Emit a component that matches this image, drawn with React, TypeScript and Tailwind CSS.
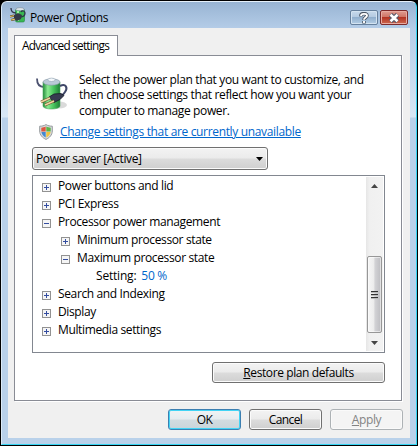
import type { ReactNode } from "react";

function BatteryIcon() {
  return (
    <svg width="34" height="34" viewBox="0 0 34 34" className="shrink-0">
      <defs>
        <linearGradient id="cell">
          <stop offset="0" stopColor="#248c3c" />
          <stop offset=".28" stopColor="#8cea92" />
          <stop offset=".6" stopColor="#4cc860" />
          <stop offset="1" stopColor="#1d7f35" />
        </linearGradient>
      </defs>
      <ellipse cx="23" cy="28" rx="8" ry="3.500" fill="#dadada" />
      <path d="M1 1.500C1 6 3 10 8 10" fill="none" stroke="#4c5270" strokeWidth="1.800" />
      <path d="M7 5v24c0 4 17 4 17 0V5z" fill="url(#cell)" stroke="#4aa85e" strokeWidth=".6" />
      <ellipse cx="15.500" cy="5" rx="8.500" ry="3.200" fill="#b9c9d6" stroke="#8596a4" strokeWidth=".6" />
      <ellipse cx="15.500" cy="2.800" rx="3.600" ry="1.700" fill="#f4f8fb" stroke="#92a2b2" strokeWidth=".6" />
      <path d="M24 9c6-3 8 2 5 6-2 3-3 3-5 5" fill="none" stroke="#3f4768" strokeWidth="2" />
      <path d="M13 20l5-3 7-.5 3 2-4 4-6 3z" fill="#363b50" stroke="#171a27" strokeWidth=".8" />
      <path d="M14 21l-9 4M18 24l-9 4" stroke="#705330" strokeWidth="3" />
      <path d="M14 21l-9 4M18 24l-9 4" stroke="#f0d7a1" strokeWidth="1.500" />
    </svg>
  );
}

function SmallBatteryIcon() {
  return (
    <svg width="16" height="16" viewBox="0 0 16 16" className="shrink-0">
      <rect x="5.500" y="2" width="9" height="13" rx="1.500" fill="#38b853" stroke="#248443" strokeWidth=".6" />
      <path d="M8 4v10" stroke="#a3efa4" strokeWidth="2" />
      <ellipse cx="10" cy="2.200" rx="4.200" ry="1.600" fill="#dce5e9" stroke="#789" strokeWidth=".6" />
      <path d="M1 1C1 4 3 6 6 6M10 10c3 0 5-1 5-4 0-2-3-3-4-1" fill="none" stroke="#30354b" strokeWidth="1.300" />
      <path d="M4 8l4-2 4 2-1 4-4 2-3-2z" fill="#343947" />
      <path d="M0 9.500l4-.8M1 13l4-.8" stroke="#594521" strokeWidth="2.200" />
      <path d="M0 9.500l4-.8M1 13l4-.8" stroke="#e6c96f" />
    </svg>
  );
}

function ShieldIcon() {
  return (
    <svg width="14" height="16" viewBox="0 0 14 16">
      <path d="M7 .6C5 1.800 3 2.200.7 2.200V7c0 4 3 7 6.300 8.400C10.300 14 13.300 11 13.300 7V2.200C11 2.200 9 1.800 7 .6z" fill="#d9dcde" stroke="#969a9d" />
      <path d="M2.300 3.700C4 3.600 5.200 3.300 6.700 2.500v5H2.300z" fill="#de563e" />
      <path d="M7.300 2.500c1.500.8 2.700 1.100 4.400 1.200v3.800H7.300z" fill="#5bb548" />
      <path d="M2.400 8h4.300v5.500C4.500 12.300 2.700 10.500 2.400 8z" fill="#4388d0" />
      <path d="M11.600 8H7.300v5.500C9.500 12.300 11.300 10.500 11.600 8z" fill="#efc33d" />
    </svg>
  );
}

function Button({ width, className, children }: { width: string; className: string; children: ReactNode }) {
  return (
    <button className={"flex h-[21px] items-center justify-center rounded-[3px] border leading-[17px] " + width + " " + className}>
      {children}
    </button>
  );
}

const normal =
  "border-[#707070] bg-[linear-gradient(#f3f3f3_0%,#ebebeb_48%,#dcdcdc_52%,#cfcfcf_100%)] shadow-[inset_0_0_0_1px_#fbfbfb]";

function Expander({ open }: { open: boolean }) {
  return (
    <svg width="9" height="9" viewBox="0 0 9 9" className="mt-[2px]" shapeRendering="crispEdges">
      <rect x=".5" y=".5" width="8" height="8" fill="#f5f5f5" stroke="#929292" />
      <path d={open ? "M2 4.500h5" : "M2 4.500h5M4.500 2v5"} stroke="#344da0" />
    </svg>
  );
}

function Row({ open = false, nested = false, children }: { open?: boolean; nested?: boolean; children: ReactNode }) {
  return (
    <div className={"flex h-[18px] items-center gap-[7px] " + (nested ? "pl-[27px]" : "pl-[8px]")}>
      <Expander open={open} />
      <span>{children}</span>
    </div>
  );
}

export default function App() {
  return (
    <div className="h-[446px] w-[418px] overflow-hidden bg-black p-px font-['Open_Sans','Noto_Sans',sans-serif] text-[12px] whitespace-nowrap text-black">
      <div className="flex h-[444px] w-[416px] flex-col rounded-t-[6px] border border-t-[#e5f0fa] border-r-[#35d5f3] border-b-[#35d5f3] border-l-[#dcebf8] bg-[linear-gradient(#98b4d3_0px,#b5cde8_27px,#d8e7f5_115px,#b9d1ea_116px,#b9d1ea_100%)] px-[6px] pb-[6px]">
        <header className="flex h-[26px] shrink-0 items-center pl-[2px]">
          <SmallBatteryIcon />
          <span className="ml-1 flex-1 pt-[5px] leading-[18px] tracking-[-0.36px]">Power Options</span>
          <div className="mt-[5px] mr-[2px] flex gap-[2px]">
            <div className="flex h-[15px] w-[28px] items-center justify-center rounded-[2px] border border-[#66809d] bg-[linear-gradient(#c7d9eb_0%,#b4cae1_46%,#91afcd_50%,#b4cee5_100%)] shadow-[inset_0_0_0_1px_#d3e3f1]">
              <svg width="10" height="12" viewBox="0 0 10 12">
                <path d="M2 4.500V3.500C2 1 8 1 8 3.500 8 5.500 5 5.500 5 8M5 9v2.500" fill="none" stroke="#4b5563" strokeWidth="3.600" />
                <path d="M2 4C2 1.200 8 1.200 8 3.500 8 5.500 5 5.500 5 7.700M5 9v2" fill="none" stroke="#fff" strokeWidth="1.900" />
              </svg>
            </div>
            <div className="flex h-[15px] w-[28px] items-center justify-center rounded-[2px] border border-[#7d2a2b] bg-[linear-gradient(#df9c91_0%,#cf7465_46%,#b33424_50%,#cd6950_100%)] shadow-[inset_0_0_0_1px_#e7aaa0]">
              <svg width="12" height="10" viewBox="0 0 12 10">
                <path d="M2.500 1.500l7 7M9.500 1.500l-7 7" stroke="#555b6d" strokeWidth="4.600" />
                <path d="M2.500 1.800l7 6.400M9.500 1.800l-7 6.400" stroke="#fff" strokeWidth="2.600" />
              </svg>
            </div>
          </div>
        </header>

        <main className="flex min-h-0 flex-1 flex-col bg-[#f0f0f0] px-[6px] pt-[7px]">
          <div className="z-10 -mb-px flex h-[21px] w-[104px] shrink-0 items-center border border-b-0 border-[#898c95] bg-white pl-[7px] text-[11.800px] tracking-[-0.75px]">
            Advanced settings
          </div>
          <section className="h-[346px] w-[388px] shrink-0 border border-[#898c95] bg-white pr-[16px] pl-[17px] shadow-[1px_1px_0_#fff]">
            <div className="flex h-[63px] gap-[9px] pt-[16px]">
              <div className="pt-[5px] pl-[4px]"><BatteryIcon /></div>
              <div className="tracking-[-0.345px]">
                <p className="h-[15px] leading-[15px]">Select the power plan that you want to customize, and</p>
                <p className="h-[15px] leading-[15px]">then choose settings that reflect how you want your</p>
                <p className="h-[15px] leading-[17px]">computer to manage power.</p>
              </div>
            </div>
            <div className="mb-[2px] flex h-[26px] items-center gap-[7px] pl-[7px]">
              <div className="-mt-px"><ShieldIcon /></div>
              <a className="tracking-[-0.34px] text-[#0066cc] underline">Change settings that are currently unavailable</a>
            </div>
            <div className={"flex h-[23px] w-[236px] items-center justify-between rounded-[3px] border pr-[4px] pl-[3px] " + normal}>
              <span className="tracking-[-0.36px]">Power saver [Active]</span>
              <svg width="7" height="4" viewBox="0 0 7 4"><path d="M0 0h7L3.500 4z" /></svg>
            </div>
            <div className="mt-[5px] flex h-[178px] w-[353px] justify-between border border-[#828790] p-px">
              <div className="tracking-[-0.37px]">
                <Row>Power buttons and lid</Row>
                <Row>PCI Express</Row>
                <Row open>Processor power management</Row>
                <Row nested>Minimum processor state</Row>
                <Row nested open>Maximum processor state</Row>
                <div className="flex h-[18px] items-center gap-[5px] pl-[62px]">
                  <span className="tracking-[-0.2px]">Setting:</span><span className="tracking-[-0.3px] text-[#0066cc]">50 %</span>
                </div>
                <Row>Search and Indexing</Row>
                <Row>Display</Row>
                <Row>Multimedia settings</Row>
              </div>
              <div className="flex w-[17px] flex-col items-center bg-[linear-gradient(90deg,#e6e6e6,#f0f0f0_20%,#f2f2f2)]">
                <div className="flex h-[79px] items-start pt-[7px]">
                  <svg width="7" height="4" viewBox="0 0 7 4"><path d="M0 4h7L3.500 0z" fill="#454545" /></svg>
                </div>
                <div className="flex h-[77px] w-[15px] flex-col items-center justify-center gap-px rounded-[2px] border border-[#979797] bg-[linear-gradient(90deg,#f6f6f6_0%,#ededed_42%,#d2d2d5_55%,#bdbdc1_100%)] shadow-[inset_0_0_0_1px_#ffffff88]">
                  <i className="h-[2px] w-[7px] border-t border-[#333] bg-[#bbb]" />
                  <i className="h-[2px] w-[7px] border-t border-[#333] bg-[#bbb]" />
                  <i className="h-[2px] w-[7px] border-t border-[#333] bg-[#bbb]" />
                </div>
                <svg width="7" height="4" viewBox="0 0 7 4" className="mt-[8px]"><path d="M0 0h7L3.500 4z" fill="#454545" /></svg>
              </div>
            </div>
            <div className="mt-[9px] flex justify-end">
              <Button width="w-[173px]" className={normal}><span className="tracking-[-0.4px]"><u>R</u>estore plan defaults</span></Button>
            </div>
          </section>
          <footer className="mt-[8px] flex gap-[8px] pl-[154px]">
            <Button width="w-[73px]" className="border-[#3c7fb1] bg-[linear-gradient(#f0f3f4_0%,#e5ecef_48%,#d2dce0_52%,#c9d5da_100%)] shadow-[inset_0_0_0_1px_#42d4f5]"><span className="tracking-[-0.5px]">OK</span></Button>
            <Button width="w-[73px]" className={normal}><span className="tracking-[-0.6px]">Cancel</span></Button>
            <Button width="w-[73px]" className="border-[#adb2b5] bg-[#f4f4f4] text-[#838383] shadow-[inset_0_0_0_1px_#fafafa]"><span className="tracking-[-0.4px]"><u>A</u>pply</span></Button>
          </footer>
        </main>
      </div>
    </div>
  );
}
